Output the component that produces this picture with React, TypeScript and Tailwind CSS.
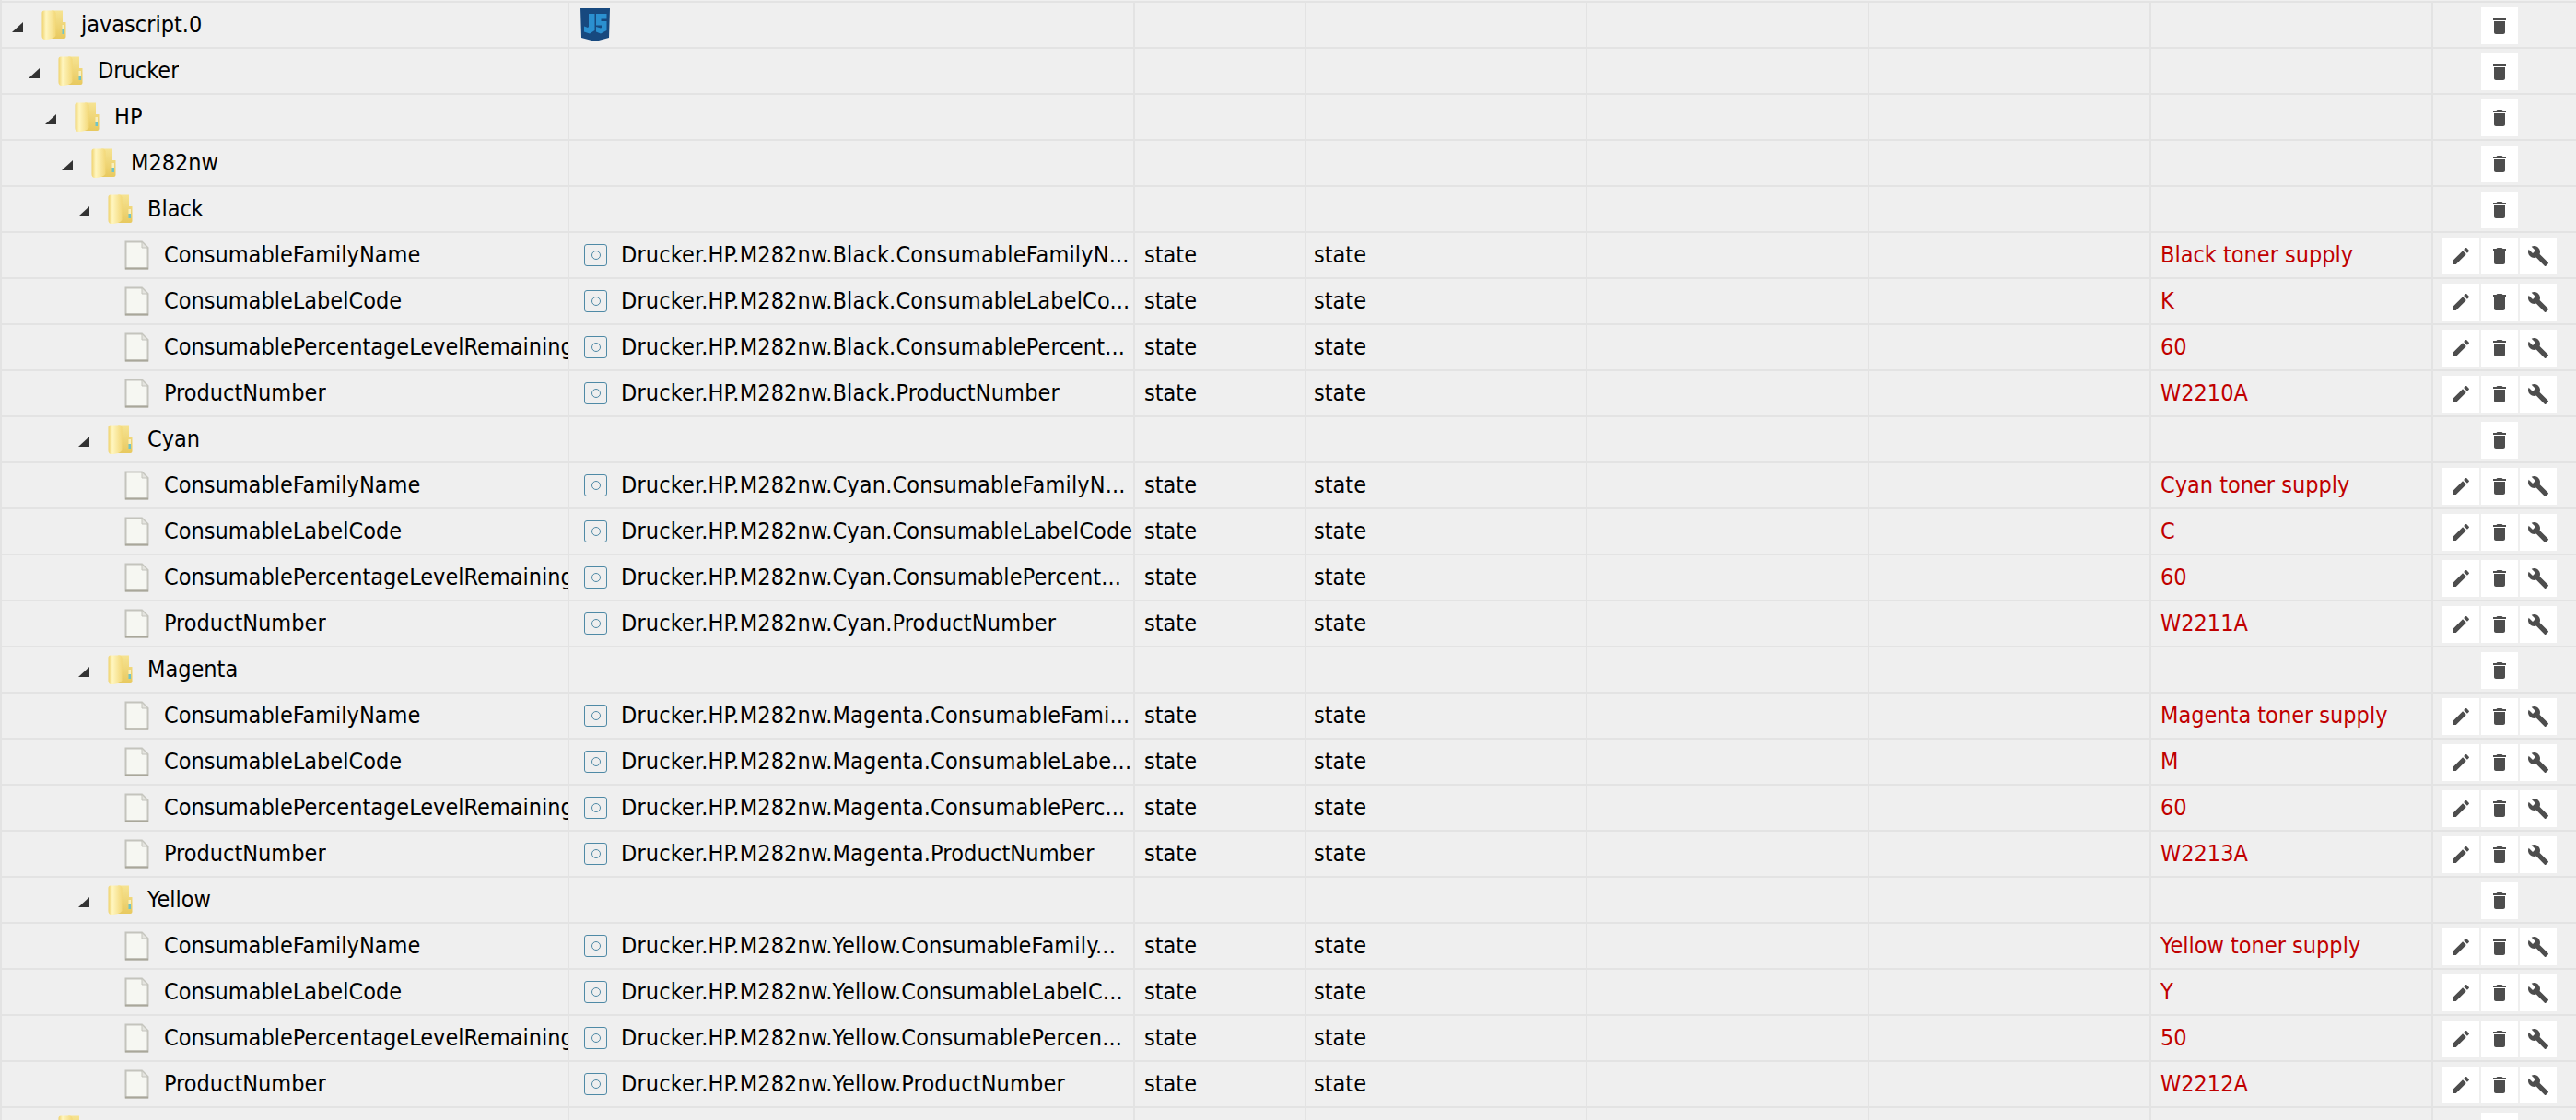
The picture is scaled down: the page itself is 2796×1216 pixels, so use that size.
// Object browser table: every row is a fixed-height grid with the same columns
const gridCols = "grid grid-cols-[616px_614px_186px_305px_306px_306px_306px_155px]";
const cellBorder = "border-r-2 border-[#e3e3e3] h-full flex items-center min-w-0";
const appFont = "font-['DejaVu_Sans_Condensed','DejaVu_Sans',sans-serif]";

type RowData = {
  level: number;
  name: string;
  folder?: boolean;
  id?: string;
  value?: string;
  js?: boolean;
};

const channels = [
  ["Black", "Black toner supply", "K", "60", "W2210A", "Drucker.HP.M282nw.Black.ConsumableFamilyN...", "Drucker.HP.M282nw.Black.ConsumableLabelCo...", "Drucker.HP.M282nw.Black.ConsumablePercent..."],
  ["Cyan", "Cyan toner supply", "C", "60", "W2211A", "Drucker.HP.M282nw.Cyan.ConsumableFamilyN...", "Drucker.HP.M282nw.Cyan.ConsumableLabelCode", "Drucker.HP.M282nw.Cyan.ConsumablePercent..."],
  ["Magenta", "Magenta toner supply", "M", "60", "W2213A", "Drucker.HP.M282nw.Magenta.ConsumableFami...", "Drucker.HP.M282nw.Magenta.ConsumableLabe...", "Drucker.HP.M282nw.Magenta.ConsumablePerc..."],
  ["Yellow", "Yellow toner supply", "Y", "50", "W2212A", "Drucker.HP.M282nw.Yellow.ConsumableFamily...", "Drucker.HP.M282nw.Yellow.ConsumableLabelC...", "Drucker.HP.M282nw.Yellow.ConsumablePercen..."],
];

const rows: RowData[] = [
  { level: 0, name: "javascript.0", folder: true, js: true },
  { level: 1, name: "Drucker", folder: true },
  { level: 2, name: "HP", folder: true },
  { level: 3, name: "M282nw", folder: true },
];

channels.forEach((c) => {
  rows.push({ level: 4, name: c[0], folder: true });
  rows.push({ level: 5, name: "ConsumableFamilyName", id: c[5], value: c[1] });
  rows.push({ level: 5, name: "ConsumableLabelCode", id: c[6], value: c[2] });
  rows.push({ level: 5, name: "ConsumablePercentageLevelRemaining", id: c[7], value: c[3] });
  rows.push({ level: 5, name: "ProductNumber", id: `Drucker.HP.M282nw.${c[0]}.ProductNumber`, value: c[4] });
});

// next folder is only just visible at the bottom edge
rows.push({ level: 1, name: "", folder: true });

function FolderIcon() {
  return (
    <svg width="27" height="32" viewBox="0 0 27 32" className="shrink-0">
      <defs>
        <linearGradient id="folderFront" x1="0" y1="0" x2="1" y2="0">
          <stop offset="0" stopColor="#efd26c" />
          <stop offset="0.3" stopColor="#fff6c0" />
          <stop offset="1" stopColor="#f3d878" />
        </linearGradient>
        <linearGradient id="folderBack" x1="0" y1="0" x2="0" y2="1">
          <stop offset="0" stopColor="#f6e392" />
          <stop offset="1" stopColor="#e8c95f" />
        </linearGradient>
      </defs>
      <path d="M11 0.5 H23 V13 H26.5 V29 Q26.5 31 24.5 31 H8 Z" fill="url(#folderBack)" />
      <path d="M3 0.5 H13 Q15 0.5 15.5 3 V28 Q14 30 11 31 L6 32 H4 Q0.5 32 0.5 28 V3 Q0.5 0.5 3 0.5 Z" fill="url(#folderFront)" />
      <rect x="22.5" y="16" width="2.5" height="5" fill="#f8efbe" />
      <rect x="22.5" y="21" width="2.5" height="5" fill="#6fc3c9" />
    </svg>
  );
}

function FileIcon() {
  return (
    <svg width="27" height="32" viewBox="0 0 27 32" className="shrink-0">
      <path d="M1.5 1.5 H19 L25.5 8 V30.5 H1.5 Z" fill="#f6f7f2" stroke="#c4c4bd" strokeWidth="2" />
      <path d="M19 1.5 V8 H25.5 Z" fill="#e4e4df" stroke="#c4c4bd" strokeWidth="1" />
      <path d="M1 30.5 H26" stroke="#a9a79a" strokeWidth="2" />
    </svg>
  );
}

function JsIcon() {
  return (
    <svg width="32" height="36" viewBox="0 0 32 36" className="-ml-[4px] shrink-0">
      <path d="M0 0 H32 L31 32 L16 36 L1 32 Z" fill="#17497f" />
      <path d="M9 6 H15.5 V24 L10 27.5 L4 25.5 V19.5 L8 21 L9 20 Z" fill="#2b90d0" />
      <path d="M17 6 H28.5 V11.5 H22.5 V14 H28.5 V24 L22 27.5 L17 25.5 V20 L22 21.5 L23 21 V18.5 H17 Z" fill="#2b90d0" />
    </svg>
  );
}

function StateIcon() {
  return (
    <span className="w-[25px] h-[24px] shrink-0 rounded-[3px] border border-[#4f8aa6] flex items-center justify-center">
      <span className="w-[10px] h-[10px] rounded-full border border-[#4f8aa6]" />
    </span>
  );
}

function ActionButton({ d }: { d: string }) {
  return (
    <button className="w-10 h-10 bg-white flex items-center justify-center shrink-0">
      <svg width="24" height="24" viewBox="0 0 24 24" fill="#4d4d4d">
        <path d={d} />
      </svg>
    </button>
  );
}

const editPath = "M3 17.25V21h3.75L17.81 9.94l-3.75-3.75L3 17.25zM20.71 7.04c.39-.39.39-1.02 0-1.41l-2.34-2.34c-.39-.39-1.02-.39-1.41 0l-1.83 1.83 3.75 3.75 1.83-1.83z";
const trashPath = "M6 19c0 1.1.9 2 2 2h8c1.1 0 2-.9 2-2V7H6v12zM19 4h-3.5l-1-1h-5l-1 1H5v2h14V4z";
const wrenchPath = "M22.7 19l-9.1-9.1c.9-2.3.4-5-1.5-6.9-2-2-5-2.4-7.4-1.3L9 6 6 9 1.6 4.7C.4 7.1.9 10.1 2.9 12.1c1.9 1.9 4.6 2.4 6.9 1.5l9.1 9.1c.4.4 1 .4 1.4 0l2.3-2.3c.5-.4.5-1.1.1-1.4z";

function TreeRow({ row }: { row: RowData }) {
  return (
    <div className={`${gridCols} h-[50px] border-b-2 border-[#e3e3e3] box-border text-[25px] text-black`}>
      <div className={cellBorder}>
        <div className="flex items-center min-w-0 overflow-hidden whitespace-nowrap" style={{ paddingLeft: row.level * 18 }}>
          <span className="w-[43px] shrink-0 flex items-center pl-[11px] pt-[5px]">
            {row.folder && <span className="w-0 h-0 border-l-[12px] border-l-transparent border-b-[11px] border-b-[#333333]" />}
          </span>
          {row.folder ? <FolderIcon /> : <FileIcon />}
          <span className="ml-[16px]">{row.name}</span>
        </div>
      </div>
      <div className={`${cellBorder} pl-[16px] overflow-hidden whitespace-nowrap`}>
        {row.js && <JsIcon />}
        {row.id && <StateIcon />}
        {row.id && <span className="ml-[15px] tracking-[0.15px]">{row.id}</span>}
      </div>
      <div className={`${cellBorder} pl-[10px]`}>{row.id && "state"}</div>
      <div className={`${cellBorder} pl-[8px]`}>{row.id && "state"}</div>
      <div className={cellBorder} />
      <div className={cellBorder} />
      <div className={`${cellBorder} pl-[10px] text-[#c00000]`}>{row.value}</div>
      <div className="h-full flex items-center pl-[10px] gap-[2px] pt-[2px]">
        {row.id ? <ActionButton d={editPath} /> : <span className="w-10" />}
        <ActionButton d={trashPath} />
        {row.id && <ActionButton d={wrenchPath} />}
      </div>
    </div>
  );
}

export default function App() {
  return (
    <div className={`w-[2796px] h-[1216px] overflow-hidden bg-[#efefef] border-l-2 border-[#e3e3e3] pt-px ${appFont}`}>
      <div className="border-t-2 border-[#e3e3e3]">
        {rows.map((row, i) => (
          <TreeRow key={i} row={row} />
        ))}
      </div>
    </div>
  );
}
